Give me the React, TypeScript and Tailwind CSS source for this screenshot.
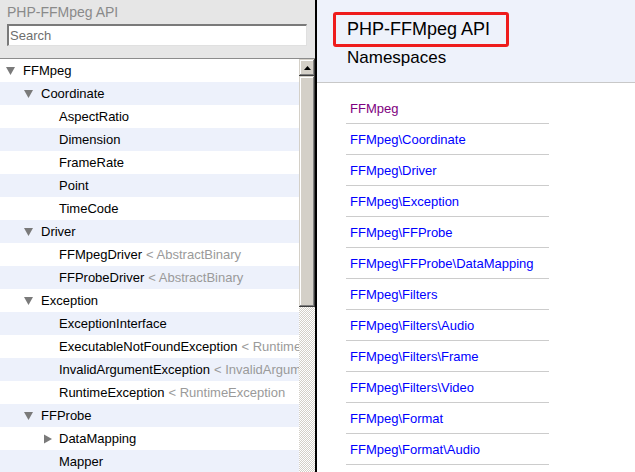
import React from "react";

type Row = { label: string; ext?: string; level: number; arrow?: "down" | "right" };

const rows: Row[] = [
  { label: "FFMpeg", level: 0, arrow: "down" },
  { label: "Coordinate", level: 1, arrow: "down" },
  { label: "AspectRatio", level: 2 },
  { label: "Dimension", level: 2 },
  { label: "FrameRate", level: 2 },
  { label: "Point", level: 2 },
  { label: "TimeCode", level: 2 },
  { label: "Driver", level: 1, arrow: "down" },
  { label: "FFMpegDriver", ext: "< AbstractBinary", level: 2 },
  { label: "FFProbeDriver", ext: "< AbstractBinary", level: 2 },
  { label: "Exception", level: 1, arrow: "down" },
  { label: "ExceptionInterface", level: 2 },
  { label: "ExecutableNotFoundException", ext: "< RuntimeException", level: 2 },
  { label: "InvalidArgumentException", ext: "< InvalidArgumentException", level: 2 },
  { label: "RuntimeException", ext: "< RuntimeException", level: 2 },
  { label: "FFProbe", level: 1, arrow: "down" },
  { label: "DataMapping", level: 2, arrow: "right" },
  { label: "Mapper", level: 2 },
];

const namespaces = [
  "FFMpeg",
  "FFMpeg\\Coordinate",
  "FFMpeg\\Driver",
  "FFMpeg\\Exception",
  "FFMpeg\\FFProbe",
  "FFMpeg\\FFProbe\\DataMapping",
  "FFMpeg\\Filters",
  "FFMpeg\\Filters\\Audio",
  "FFMpeg\\Filters\\Frame",
  "FFMpeg\\Filters\\Video",
  "FFMpeg\\Format",
  "FFMpeg\\Format\\Audio",
];

const pad = ["pl-[5px]", "pl-[23px]", "pl-[41px]"];

function Arrow({ dir }: { dir?: "down" | "right" }) {
  return (
    <span className="w-[18px] shrink-0 flex items-center">
      {dir === "down" && (
        <svg width="10" height="9" viewBox="0 0 10 9" className="ml-[1px]">
          <polygon points="0,1 9,1 4.5,9" fill="#7a7a7a" />
        </svg>
      )}
      {dir === "right" && (
        <svg width="9" height="10" viewBox="0 0 9 10" className="ml-[3px]">
          <polygon points="0,0.5 8,5 0,9.5" fill="#7a7a7a" />
        </svg>
      )}
    </span>
  );
}

export default function App() {
  return (
    <div
      className="w-[635px] h-[472px] overflow-hidden flex bg-white"
      style={{ fontFamily: '"Liberation Sans", Arial, sans-serif' }}
    >
      {/* Left panel */}
      <div className="w-[317px] shrink-0 h-full flex flex-col border-r-2 border-black bg-[#e6e6e6]">
        <div className="h-[59px] shrink-0 border-b border-[#8c8c8c] px-[7px] pt-[4px]">
          <div className="text-[14px] leading-[17px] text-[#8a8a8a]">PHP-FFMpeg API</div>
          <div className="mt-[3px] h-[22px] w-[300px] bg-white border-t-2 border-l-2 border-[#7a7a7a] border-b border-r border-b-[#e0e0e0] border-r-[#e0e0e0] flex items-center pl-[1px] text-[13px] text-[#6e6e6e]">
            Search
          </div>
        </div>
        <div className="flex-1 flex min-h-0">
          <div className="w-[299px] shrink-0 overflow-hidden bg-white">
            {rows.map((r, i) => (
              <div
                key={i}
                className={`h-[23px] flex items-center whitespace-nowrap text-[13px] text-black ${pad[r.level]} ${
                  i % 2 === 1 ? "bg-[#edf1fb]" : "bg-white"
                }`}
              >
                <Arrow dir={r.arrow} />
                <span>{r.label}</span>
                {r.ext && <span className="ml-[4px] text-[#9a9a9a]">{r.ext}</span>}
              </div>
            ))}
          </div>
          <div className="w-[16px] shrink-0 flex flex-col">
            <div className="h-[17px] shrink-0 bg-[#d4d0c8] shadow-[inset_-1px_-1px_#404040,inset_1px_1px_#d4d0c8,inset_-2px_-2px_#808080,inset_2px_2px_#ffffff] flex items-center justify-center">
              <svg width="7" height="4" viewBox="0 0 7 4">
                <polygon points="3.5,0 7,4 0,4" fill="#000" />
              </svg>
            </div>
            <div className="h-[231px] shrink-0 bg-[#d4d0c8] shadow-[inset_-1px_-1px_#404040,inset_1px_1px_#d4d0c8,inset_-2px_-2px_#808080,inset_2px_2px_#ffffff]" />
            <div className="flex-1 bg-[conic-gradient(#d4d0c8_25%,#ffffff_0_50%,#d4d0c8_0_75%,#ffffff_0)] bg-[length:2px_2px]" />
          </div>
        </div>
      </div>

      {/* Right panel */}
      <div className="flex-1 h-full flex flex-col">
        <div className="h-[83px] shrink-0 bg-[#eef2fb] border-b border-[#c8c8c8] pl-[16px] pt-[12px]">
          <div className="w-[176px] h-[35px] border-[3px] border-[#ee1c1c] rounded-[3px] flex items-center pl-[11px] text-[18px] text-black">
            PHP-FFMpeg API
          </div>
          <div className="pl-[14px] mt-[1px] text-[17px] leading-[20px] text-black">Namespaces</div>
        </div>
        <div className="pl-[29px] pt-[10px]">
          {namespaces.map((n, i) => (
            <div
              key={i}
              className={`w-[203px] h-[31px] border-b border-[#cccccc] flex items-center pl-[4px] pt-[2px] text-[13px] ${
                i === 0 ? "text-[#800080]" : "text-[#0000ff]"
              }`}
            >
              {n}
            </div>
          ))}
        </div>
      </div>
    </div>
  );
}
